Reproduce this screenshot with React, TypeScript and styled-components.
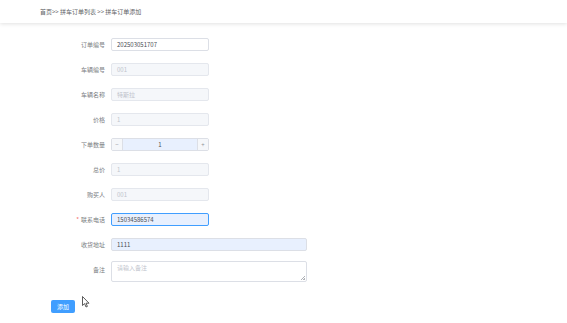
import React from "react";
import styled, { createGlobalStyle } from "styled-components";

const Global = createGlobalStyle`
  html, body { margin: 0; padding: 0; background: #fff; }
  body { font-family: "Noto Sans CJK SC", "Noto Sans", sans-serif; }
  * { box-sizing: border-box; }
`;

const Page = styled.div`
  position: relative;
  width: 567px;
  height: 323px;
  overflow: hidden;
  background: #fff;
`;

const Header = styled.div`
  height: 23px;
  display: flex;
  align-items: center;
  padding-left: 40px;
  padding-bottom: 1px;
  background: #fff;
  font-size: 6px;
  color: #606266;
  box-shadow: 0 1px 4px rgba(0, 0, 0, 0.12);
`;

const Form = styled.div`
  display: flex;
  flex-direction: column;
  padding-top: 15px;
`;

const Row = styled.div<{ $gap?: number }>`
  display: flex;
  align-items: flex-start;
  margin-bottom: ${(p) => p.$gap ?? 12}px;
`;

const Label = styled.div<{ $tall?: boolean }>`
  width: 106px;
  padding-right: 1px;
  text-align: right;
  font-size: 6px;
  color: #7a7d82;
  line-height: ${(p) => (p.$tall ? "17px" : "13px")};
  flex: none;
`;

const Star = styled.span`
  color: #f56c6c;
  margin-right: 2px;
`;

const Field = styled.div<{ $w: number; $disabled?: boolean; $fill?: boolean; $focus?: boolean }>`
  margin-left: 5px;
  width: ${(p) => p.$w}px;
  height: 13px;
  display: flex;
  align-items: center;
  padding-left: 5px;
  font-size: 6px;
  border-radius: 2px;
  border: 1px solid
    ${(p) => (p.$focus ? "#409eff" : p.$disabled ? "#e4e7ed" : "#dcdfe6")};
  background: ${(p) => (p.$fill ? "#e8f0fe" : p.$disabled ? "#f5f7fa" : "#fff")};
  color: ${(p) => (p.$disabled ? "#c0c4cc" : "#4a4d52")};
`;

const Number = styled.div`
  margin-left: 5px;
  width: 98px;
  height: 13px;
  display: flex;
  border: 1px solid #dcdfe6;
  border-radius: 2px;
  overflow: hidden;
  font-size: 6px;
`;

const Step = styled.div<{ $side: "l" | "r" }>`
  width: 11px;
  flex: none;
  display: flex;
  align-items: center;
  justify-content: center;
  background: #f5f7fa;
  color: #909399;
  ${(p) => (p.$side === "l" ? "border-right: 1px solid #dcdfe6;" : "border-left: 1px solid #dcdfe6;")}
`;

const NumValue = styled.div`
  flex: 1;
  display: flex;
  align-items: center;
  justify-content: center;
  background: #e8f0fe;
  color: #4a4d52;
`;

const Area = styled.textarea`
  margin: 0 0 0 5px;
  width: 196px;
  height: 21px;
  padding: 2px 5px;
  font-family: inherit;
  font-size: 6px;
  line-height: 8px;
  border: 1px solid #dcdfe6;
  border-radius: 2px;
  color: #4a4d52;
  outline: none;
  resize: none;
  background:
    linear-gradient(135deg, transparent 50%, #b0b3b8 50%, #b0b3b8 62%, transparent 62%, transparent 75%, #b0b3b8 75%) no-repeat right 1px bottom 1px / 4px 4px,
    #fff;
  &::placeholder { color: #c0c4cc; }
`;

const Actions = styled.div`
  padding-left: 51px;
  margin-top: -4px;
`;

const Button = styled.button`
  width: 24px;
  height: 13px;
  padding: 0;
  border: none;
  border-radius: 2px;
  background: #409eff;
  color: #fff;
  font-family: inherit;
  font-size: 6px;
`;

const Cursor = styled.svg`
  position: absolute;
  left: 82px;
  top: 296px;
`;

export default function App() {
  return (
    <Page>
      <Global />
      <Header>首页&gt;&gt; 拼车订单列表 &gt;&gt; 拼车订单添加</Header>
      <Form>
        <Row>
          <Label>订单编号</Label>
          <Field $w={98}>202503051707</Field>
        </Row>
        <Row>
          <Label>车辆编号</Label>
          <Field $w={98} $disabled>001</Field>
        </Row>
        <Row>
          <Label>车辆名称</Label>
          <Field $w={98} $disabled>特斯拉</Field>
        </Row>
        <Row>
          <Label>价格</Label>
          <Field $w={98} $disabled>1</Field>
        </Row>
        <Row>
          <Label>下单数量</Label>
          <Number>
            <Step $side="l">−</Step>
            <NumValue>1</NumValue>
            <Step $side="r">+</Step>
          </Number>
        </Row>
        <Row>
          <Label>总价</Label>
          <Field $w={98} $disabled>1</Field>
        </Row>
        <Row>
          <Label>购买人</Label>
          <Field $w={98} $disabled>001</Field>
        </Row>
        <Row>
          <Label><Star>*</Star>联系电话</Label>
          <Field $w={98} $fill $focus>15034586574</Field>
        </Row>
        <Row $gap={10}>
          <Label>收货地址</Label>
          <Field $w={196} $fill>1111</Field>
        </Row>
        <Row>
          <Label $tall>备注</Label>
          <Area placeholder="请输入备注" />
        </Row>
        <Actions>
          <Button>添加</Button>
        </Actions>
      </Form>
      <Cursor width="8" height="12" viewBox="0 0 8 12">
        <path d="M0.5 0.5 L0.5 9.5 L2.6 7.6 L4 11 L5.4 10.4 L4 7.2 L7 7.2 Z" fill="#fff" stroke="#333" strokeWidth="0.8" strokeLinejoin="round" />
      </Cursor>
    </Page>
  );
}
